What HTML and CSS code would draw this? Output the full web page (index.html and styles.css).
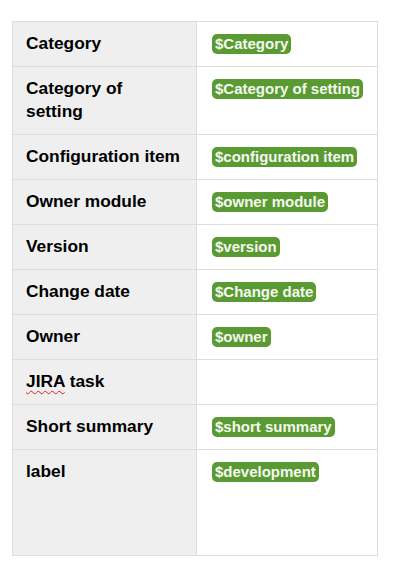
FILE: index.html
```html
<!DOCTYPE html>
<html lang="en">
<head>
    <meta charset="UTF-8">
    <meta name="viewport" content="width=device-width, initial-scale=1.0">
    <title>Configuration properties</title>
    <link rel="stylesheet" href="styles.css">
</head>
<body>
    <div class="page">
        <table class="props">
            <colgroup>
                <col class="key-col">
                <col class="value-col">
            </colgroup>
            <tr>
                <th>Category</th>
                <td><span class="tag">$Category</span></td>
            </tr>
            <tr>
                <th>Category of setting</th>
                <td><span class="tag">$Category of setting</span></td>
            </tr>
            <tr>
                <th>Configuration item</th>
                <td><span class="tag">$configuration item</span></td>
            </tr>
            <tr>
                <th>Owner module</th>
                <td><span class="tag">$owner module</span></td>
            </tr>
            <tr>
                <th>Version</th>
                <td><span class="tag">$version</span></td>
            </tr>
            <tr>
                <th>Change date</th>
                <td><span class="tag">$Change date</span></td>
            </tr>
            <tr>
                <th>Owner</th>
                <td><span class="tag">$owner</span></td>
            </tr>
            <tr>
                <th><span class="misspelled">JIRA</span> task</th>
                <td></td>
            </tr>
            <tr>
                <th>Short summary</th>
                <td><span class="tag">$short summary</span></td>
            </tr>
            <tr class="tall">
                <th>label</th>
                <td><span class="tag">$development</span></td>
            </tr>
        </table>
    </div>
</body>
</html>
```

FILE: styles.css
```css
* {
    margin: 0;
    padding: 0;
    box-sizing: border-box;
}

body {
    background: white;
    font-family: 'Liberation Sans', Arial, sans-serif;
    color: #000;
}

.page {
    padding: 21px 17px 12px 12px;
}

.props {
    width: 366px;
    table-layout: fixed;
    border-collapse: collapse;
    border: 1px solid #dddddd;
}

.key-col {
    width: 184px;
}

.props th,
.props td {
    border: 1px solid #dddddd;
    vertical-align: top;
    text-align: left;
    line-height: 23px;
}

.props th {
    background: #efefef;
    font-size: 13pt;
    font-weight: bold;
    padding: 10px 13px 11px 13px;
}

.props td {
    padding: 10px 8px 11px 15px;
    font-size: 15px;
}

.props tr.tall th,
.props tr.tall td {
    height: 106px;
}

.tag {
    display: inline-block;
    white-space: nowrap;
    background: #5a9a32;
    color: #f4f9ef;
    font-weight: bold;
    font-size: 15px;
    line-height: 20px;
    padding: 0 3px;
    border-radius: 5px;
    margin-top: 2px;
    vertical-align: top;
}

.misspelled {
    text-decoration: underline wavy #e02020;
    text-decoration-thickness: 1px;
    text-underline-offset: 3px;
}
```
